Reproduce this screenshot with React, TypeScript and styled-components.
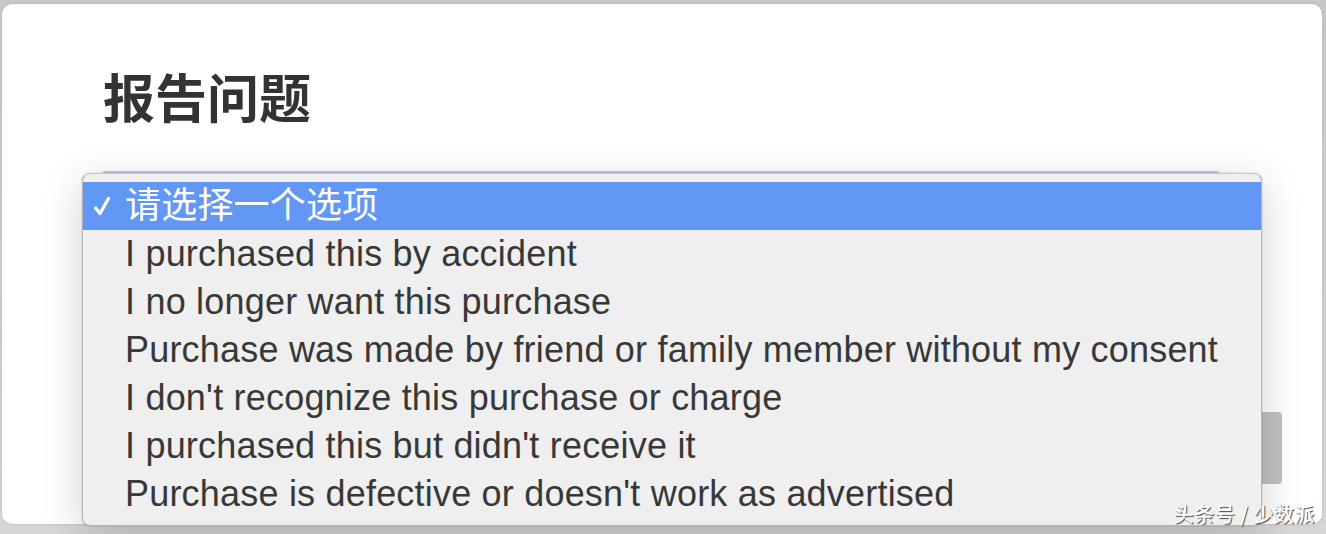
import * as React from 'react';
import styled, { createGlobalStyle } from 'styled-components';

const GlobalStyle = createGlobalStyle`
  html, body {
    margin: 0;
    padding: 0;
    background: #cfcfcf;
  }
  body {
    font-family: 'Liberation Sans', 'Noto Sans CJK SC', sans-serif;
  }
`;

const options = [
  'I purchased this by accident',
  'I no longer want this purchase',
  'Purchase was made by friend or family member without my consent',
  "I don't recognize this purchase or charge",
  "I purchased this but didn't receive it",
  "Purchase is defective or doesn't work as advertised",
];

const App = () => {
  return (
    <Page>
      <GlobalStyle />
      <Card>
        <Title>报告问题</Title>
        <SelectField />
        <Footer>
          <SubmitButton />
        </Footer>
      </Card>
      <Menu>
        <MenuItem selected>
          <Check viewBox="0 0 18 20">
            <path d="M2.5 12 L7 17.5 L15.5 2.5" />
          </Check>
          请选择一个选项
        </MenuItem>
        {options.map((o) => (
          <MenuItem key={o}>{o}</MenuItem>
        ))}
      </Menu>
      <Watermark>头条号 / 少数派</Watermark>
    </Page>
  );
};

const Page = styled.div`
  position: relative;
  width: 1326px;
  height: 534px;
  padding: 4px 4px 0 2px;
  box-sizing: border-box;
  overflow: hidden;
  background: linear-gradient(#c8c8c8, #d6d6d6);
`;

const Card = styled.div`
  height: 520px;
  background: #ffffff;
  border-radius: 10px;
  box-shadow: 0 0 3px rgba(0, 0, 0, 0.15);
  padding: 56px 0 0 101px;
  box-sizing: border-box;
  display: flex;
  flex-direction: column;
`;

const Title = styled.h1`
  margin: 0;
  font-size: 52px;
  line-height: 72px;
  font-weight: 700;
  color: #333333;
  font-family: 'Noto Sans CJK SC', sans-serif;
`;

const SelectField = styled.div`
  margin: 39px 0 0 -3px;
  width: 1122px;
  height: 58px;
  border-top: 2px solid #b9cde4;
  border-radius: 6px;
  background: #ffffff;
`;

const Footer = styled.div`
  display: flex;
  justify-content: flex-end;
  padding: 0 40px 0 0;
  margin-top: 181px;
`;

const SubmitButton = styled.div`
  width: 200px;
  height: 72px;
  border-radius: 4px;
  background: #c1c1c1;
`;

const Menu = styled.div`
  position: absolute;
  left: 82px;
  top: 173px;
  width: 1180px;
  padding: 8px 0 7px;
  box-sizing: border-box;
  background: #efefef;
  border: 1px solid #b4b4b4;
  border-top-color: #c8c8c8;
  border-radius: 8px;
  box-shadow: 0 10px 40px rgba(0, 0, 0, 0.18), 0 0 2px rgba(0, 0, 0, 0.2);
`;

const MenuItem = styled.div<{ selected?: boolean }>`
  position: relative;
  height: 48px;
  line-height: 48px;
  padding-left: 42px;
  font-size: 36px;
  letter-spacing: 0.2px;
  color: ${(p) => (p.selected ? '#ffffff' : '#383838')};
  background: ${(p) => (p.selected ? '#6297f6' : 'transparent')};
  font-family: 'Liberation Sans', 'Noto Sans CJK SC', sans-serif;
  white-space: nowrap;
`;

const Check = styled.svg`
  position: absolute;
  left: 10px;
  top: 14px;
  width: 18px;
  height: 20px;
  fill: none;
  stroke: #ffffff;
  stroke-width: 3.4;
  stroke-linecap: round;
  stroke-linejoin: round;
`;

const Watermark = styled.div`
  position: absolute;
  right: 11px;
  bottom: 6px;
  font-size: 20px;
  font-weight: 500;
  color: #ffffff;
  font-family: 'Noto Sans CJK SC', sans-serif;
  text-shadow: 1px 1px 1px rgba(0, 0, 0, 0.7);
  letter-spacing: 0.5px;
`;

export default App;
